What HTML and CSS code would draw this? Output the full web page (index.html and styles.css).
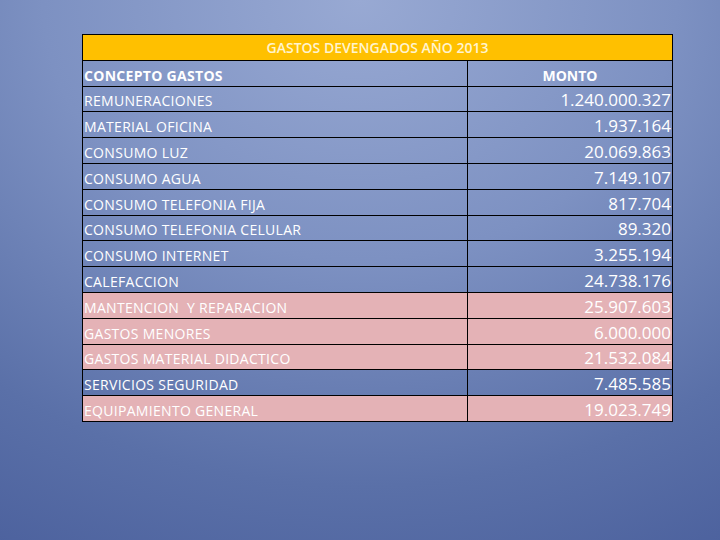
FILE: index.html
```html
<!DOCTYPE html>
<html lang="es">
<head>
<meta charset="utf-8">
<title>Gastos devengados 2013</title>
<link rel="stylesheet" href="styles.css">
</head>
<body>
<div class="slide">
  <table class="gastos">
    <colgroup><col class="col1"><col class="col2"></colgroup>
    <tr class="title"><th colspan="2">GASTOS DEVENGADOS AÑO 2013</th></tr>
    <tr class="head"><th class="c1">CONCEPTO GASTOS</th><th class="c2">MONTO</th></tr>
    <tr><td class="c1">REMUNERACIONES</td><td class="c2">1.240.000.327</td></tr>
    <tr><td class="c1">MATERIAL OFICINA</td><td class="c2">1.937.164</td></tr>
    <tr><td class="c1">CONSUMO LUZ</td><td class="c2">20.069.863</td></tr>
    <tr><td class="c1">CONSUMO AGUA</td><td class="c2">7.149.107</td></tr>
    <tr><td class="c1">CONSUMO TELEFONIA FIJA</td><td class="c2">817.704</td></tr>
    <tr><td class="c1">CONSUMO TELEFONIA CELULAR</td><td class="c2">89.320</td></tr>
    <tr><td class="c1">CONSUMO INTERNET</td><td class="c2">3.255.194</td></tr>
    <tr><td class="c1">CALEFACCION</td><td class="c2">24.738.176</td></tr>
    <tr class="pink"><td class="c1">MANTENCION  Y REPARACION</td><td class="c2">25.907.603</td></tr>
    <tr class="pink"><td class="c1">GASTOS MENORES</td><td class="c2">6.000.000</td></tr>
    <tr class="pink"><td class="c1">GASTOS MATERIAL DIDACTICO</td><td class="c2">21.532.084</td></tr>
    <tr><td class="c1">SERVICIOS SEGURIDAD</td><td class="c2">7.485.585</td></tr>
    <tr class="pink"><td class="c1">EQUIPAMIENTO GENERAL</td><td class="c2">19.023.749</td></tr>
  </table>
</div>
</body>
</html>
```

FILE: styles.css
```css
html, body {
  margin: 0;
  padding: 0;
}
body {
  width: 720px;
  height: 540px;
  overflow: hidden;
  background: radial-gradient(ellipse 110% 120% at 50% 0%, #98a9d3 0%, #7d91c2 40%, #5a70a8 75%, #4a5f9c 100%);
  font-family: "Open Sans", "Liberation Sans", sans-serif;
  color: #ffffff;
}
.slide {
  padding: 34px 0 0 82px;
}
.gastos {
  border-collapse: collapse;
  width: 590px;
  table-layout: fixed;
}
.col1 {
  width: 385px;
}
.col2 {
  width: 205px;
}
.gastos th, .gastos td {
  border: 1px solid #000;
  padding: 0 1px;
  height: 24.8px;
  white-space: pre;
  overflow: hidden;
}
.title th {
  background: #ffc000;
  color: #fff4cf;
  font-size: 14px;
  font-weight: 600;
  text-align: center;
  padding-top: 1px;
  height: 23.8px;
}
.head th {
  font-size: 14px;
  font-weight: 700;
  vertical-align: bottom;
  line-height: 20px;
}
.head th.c1 {
  text-align: left;
}
.head th.c2 {
  text-align: center;
}
.c1 {
  font-size: 14px;
  letter-spacing: 0.3px;
  text-align: left;
  vertical-align: bottom;
}
td.c2 {
  font-size: 17px;
  text-align: right;
  vertical-align: bottom;
  line-height: 22px;
}
td.c1 {
  line-height: 20px;
}
.pink td {
  background: #e4b2b6;
}
```
